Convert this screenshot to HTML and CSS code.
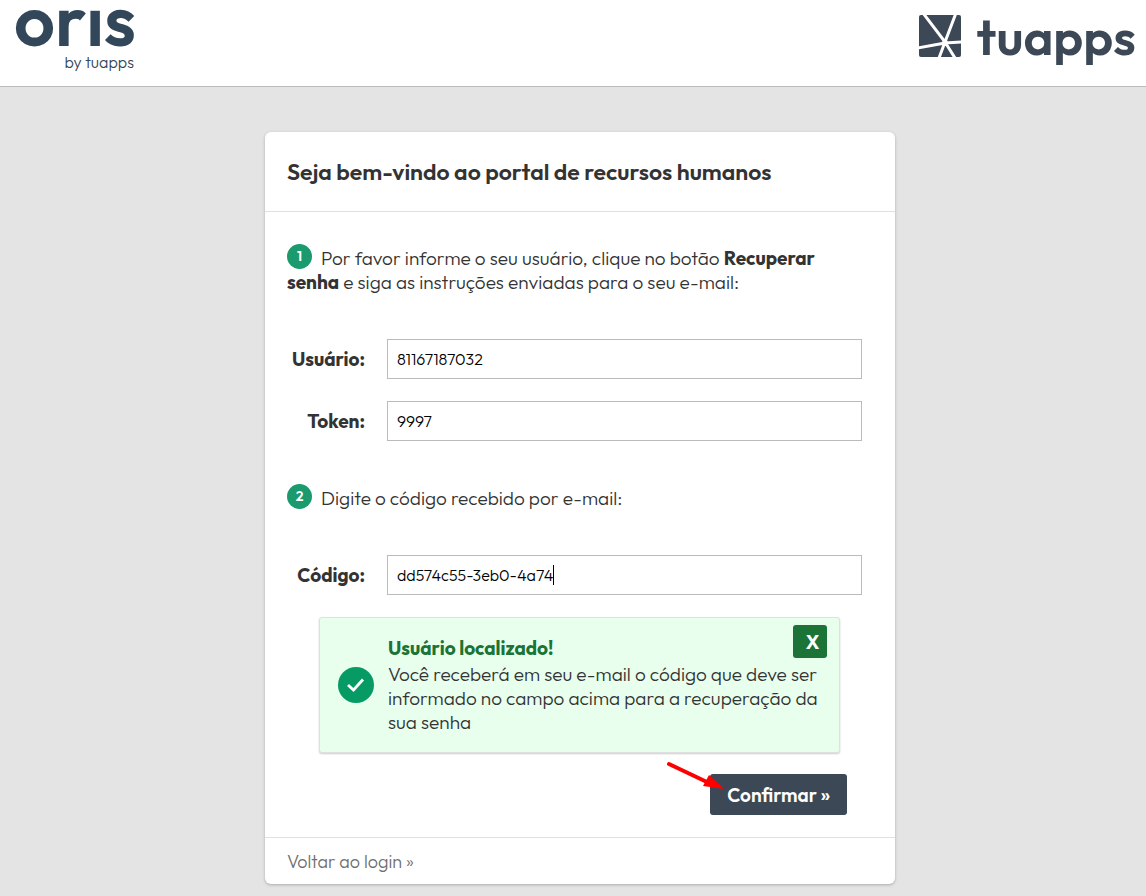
FILE: index.html
```html
<!DOCTYPE html>
<html lang="pt-BR">
<head>
<meta charset="utf-8">
<meta name="viewport" content="width=device-width, initial-scale=1">
<title>Portal de recursos humanos</title>
<link rel="stylesheet" href="styles.css">
</head>
<body>
<header class="topbar">
  <div class="brand">
    <span class="brand-name" role="img" aria-label="oris">orıs</span>
    <span class="brand-by">by tuapps</span>
  </div>
  <div class="company">
    <svg class="company-mark" viewBox="0 0 42 42" aria-hidden="true">
      <rect width="42" height="42" rx="2" fill="#3c4855"/>
      <path d="M4 -2L26 27L37 -2M-1 33L26 28L43 27M20 43L26 27L36 43" fill="none" stroke="#fff" stroke-width="3"/>
      <circle cx="26" cy="28" r="3" fill="#fff"/>
    </svg>
    <span class="company-name">tuapps</span>
  </div>
</header>
<main class="page">
  <section class="card">
    <h1 class="card-title">Seja bem-vindo ao portal de recursos humanos</h1>
    <form class="card-body">
      <p class="step"><span class="num">1</span>Por favor informe o seu usuário, clique no botão <b>Recuperar senha</b> e siga as instruções enviadas para o seu e-mail:</p>
      <div class="fields">
        <label class="label" for="user">Usuário:</label>
        <input class="input" id="user" type="text" value="81167187032">
        <label class="label" for="token">Token:</label>
        <input class="input" id="token" type="text" value="9997">
      </div>
      <p class="step"><span class="num">2</span>Digite o código recebido por e-mail:</p>
      <div class="fields">
        <label class="label" for="code">Código:</label>
        <div class="field">
          <input class="input" id="code" type="text" value="dd574c55-3eb0-4a74">
          <span class="caret"></span>
        </div>
      </div>
      <div class="alert" role="status">
        <svg class="alert-icon" viewBox="0 0 36 36" aria-hidden="true">
          <circle cx="18" cy="18" r="18" fill="#069b64"/>
          <path d="M10 18L15.500 23L25 12.500" fill="none" stroke="#fff" stroke-width="2.800"/>
        </svg>
        <div class="alert-text">
          <strong class="alert-title">Usuário localizado!</strong>
          <p class="alert-message">Você receberá em seu e-mail o código que deve ser informado no campo acima para a recuperação da sua senha</p>
        </div>
        <button class="close" type="button">X</button>
      </div>
      <div class="actions">
        <button class="confirm" type="button">Confirmar »</button>
        <svg class="arrow" viewBox="0 0 58 32" aria-hidden="true">
          <path d="M3 4L43 23" stroke="#f00" stroke-width="4" stroke-linecap="round"/>
          <path d="M43 15L58 29L37 26Z" fill="#f00"/>
        </svg>
      </div>
    </form>
    <footer class="card-footer"><a class="back" href="#login">Voltar ao login »</a></footer>
  </section>
</main>
</body>
</html>
```
FILE: styles.css
```css
* {
  box-sizing: border-box;
}

body {
  margin: 0;
  background: #e4e4e4;
  color: #333;
  font: 300 19px/24px Outfit, Lato, sans-serif;
}

b {
  font-weight: 700;
}

.topbar {
  display: flex;
  justify-content: space-between;
  padding: 0 10px 0 14px;
  height: 87px;
  background: #fff;
  border-bottom: 1px solid #bbb;
}

.brand {
  display: flex;
  flex-direction: column;
  align-items: flex-end;
  color: #32475a;
}

.brand-name {
  font-size: 72px;
  font-weight: 600;
  line-height: 40px;
}

.brand-by {
  padding: 12px 2px 0 0;
  font-size: 16px;
  line-height: 20px;
}

.company {
  display: flex;
  align-items: flex-start;
  gap: 16px;
  padding-top: 15px;
  color: #3c4855;
}

.company-mark {
  width: 42px;
  height: 42px;
}

.company-name {
  font-size: 51px;
  font-weight: 600;
  line-height: 42px;
}

.page {
  padding: 45px 0 12px 14px;
}

.card {
  max-width: 630px;
  margin: 0 auto;
  background: #fff;
  border-radius: 6px;
  box-shadow: 0 1px 3px #aaa;
}

.card-title {
  margin: 0;
  padding: 28px 22px;
  border-bottom: 1px solid #e0e0e0;
  font-size: 23px;
  line-height: 23px;
  font-weight: 600;
}

.card-body {
  padding: 34px 22px 22px;
}

.step {
  margin: 0;
  padding-right: 22px;
}

.num {
  display: inline-block;
  width: 25px;
  height: 25px;
  margin: -4px 9px -4px 0;
  border-radius: 50%;
  background: #1b9a6e;
  color: #fff;
  font-size: 14px;
  font-weight: 600;
  line-height: 25px;
  text-align: center;
  vertical-align: 4px;
}

.fields {
  display: grid;
  grid-template-columns: 78px 1fr;
  align-items: center;
  gap: 22px;
  padding: 45px 11px 45px 0;
}

.label {
  font-weight: 700;
  text-align: right;
}

.field {
  position: relative;
  display: flex;
}

.caret {
  position: absolute;
  top: 10px;
  left: 166px;
  width: 1px;
  height: 20px;
  background: #000;
}

.input {
  width: 100%;
  height: 40px;
  padding: 0 9px;
  border: 1px solid #bbb;
  border-radius: 0;
  outline: none;
  background: #fff;
  color: #000;
  font: inherit;
  font-size: 16px;
}

.alert {
  position: relative;
  display: flex;
  align-items: center;
  gap: 14px;
  margin: -23px 33px 0 32px;
  padding: 18px;
  border: 1px solid #e0e0e0;
  border-radius: 3px;
  background: #e8ffee;
  box-shadow: 0 1px 2px #ccc;
}

.alert-icon {
  flex: none;
  width: 36px;
  height: 36px;
}

.alert-title {
  display: block;
  padding-bottom: 2px;
  color: #1b7335;
  font-weight: 700;
}

.alert-message {
  margin: 0;
}

.close {
  position: absolute;
  top: 7px;
  right: 12px;
  width: 34px;
  height: 33px;
  padding: 0 0 0 5px;
  border: 0;
  border-radius: 3px;
  background: #1b7335;
  color: #fff;
  font: inherit;
  font-weight: 700;
}

.actions {
  position: relative;
  display: flex;
  justify-content: flex-end;
  padding: 21px 26px 0 0;
}

.confirm {
  height: 41px;
  padding: 0 17px;
  border: 0;
  border-radius: 3px;
  background: #3c4855;
  color: #fff;
  font: inherit;
  font-weight: 600;
}

.arrow {
  position: absolute;
  top: 7px;
  right: 149px;
  width: 58px;
  height: 32px;
}

.card-footer {
  padding: 12px 22px 11px;
  border-top: 1px solid #e0e0e0;
  font-size: 18px;
  line-height: 23px;
}

.back {
  color: #707070;
  text-decoration: none;
}
```
